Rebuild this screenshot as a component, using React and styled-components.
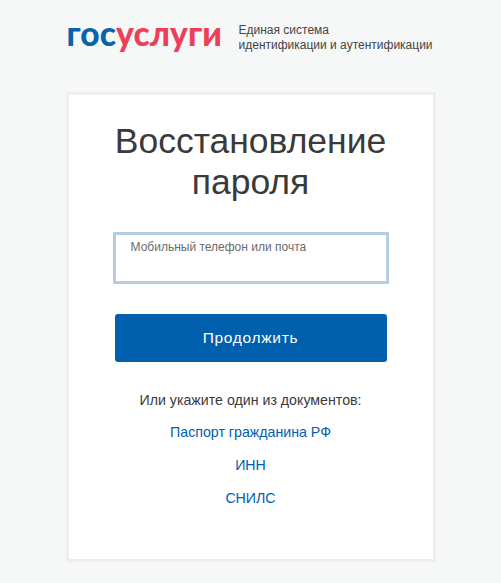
import React from "react";
import styled, { createGlobalStyle } from "styled-components";

const GlobalStyle = createGlobalStyle`
  html, body {
    margin: 0;
    padding: 0;
    background: #f6f8f8;
    font-family: "Liberation Sans", Arial, sans-serif;
  }
`;

function App() {
  return (
    <Page>
      <GlobalStyle />
      <Header>
        <Logo>
          <span>гос</span>
          <b>услуги</b>
        </Logo>
        <Tagline>
          Единая система
          <br />
          идентификации и аутентификации
        </Tagline>
      </Header>
      <Card>
        <Title>Восстановление пароля</Title>
        <Field>
          <FieldLabel>Мобильный телефон или почта</FieldLabel>
        </Field>
        <Button>Продолжить</Button>
        <Hint>Или укажите один из документов:</Hint>
        <DocLink>Паспорт гражданина РФ</DocLink>
        <DocLink>ИНН</DocLink>
        <DocLink>СНИЛС</DocLink>
      </Card>
    </Page>
  );
}

const Page = styled.div`
  width: 501px;
  height: 583px;
  overflow: hidden;
  display: flex;
  flex-direction: column;
  align-items: center;
`;
const Header = styled.div`
  width: 370px;
  height: 92px;
  box-sizing: border-box;
  padding-top: 15px;
  display: flex;
  align-items: flex-start;
`;
const Logo = styled.div`
  width: 173px;
  padding-left: 1px;
  box-sizing: border-box;
  font-family: Lato, sans-serif;
  font-weight: 900;
  font-size: 33.5px;
  line-height: 36px;
  letter-spacing: 0.1px;
  color: #0b62ad;
  white-space: nowrap;
  b {
    color: #ee3f58;
    font-weight: 900;
  }
`;
const Tagline = styled.div`
  font-size: 12px;
  line-height: 15px;
  color: #444;
  padding-top: 8px;
  white-space: nowrap;
`;
const Card = styled.div`
  width: 370px;
  height: 470px;
  box-sizing: border-box;
  border: 3px solid #eeeeee;
  background: #fff;
  display: flex;
  flex-direction: column;
  align-items: center;
  padding-top: 26px;
`;
const Title = styled.h1`
  margin: 0 0 29px;
  width: 290px;
  font-weight: 400;
  font-size: 35.5px;
  line-height: 41px;
  text-align: center;
  color: #3a3a3a;
`;
const Field = styled.div`
  width: 276px;
  height: 52px;
  box-sizing: border-box;
  border: 3px solid #b5cde3;
  padding: 5px 0 0 15px;
  margin-bottom: 30px;
`;
const FieldLabel = styled.div`
  font-size: 12px;
  line-height: 14px;
  color: #6b6b6b;
`;
const Button = styled.button`
  width: 272px;
  height: 48px;
  border: 0;
  border-radius: 3px;
  background: #0060ae;
  color: #fff;
  font-family: inherit;
  font-size: 15.5px;
  letter-spacing: 0.7px;
  padding: 0;
  margin-bottom: 22px;
`;
const Hint = styled.div`
  font-size: 14.2px;
  line-height: 32px;
  color: #3a3a3a;
`;
const DocLink = styled.a`
  font-size: 14.2px;
  line-height: 33px;
  color: #0060ae;
`;

export default App;
